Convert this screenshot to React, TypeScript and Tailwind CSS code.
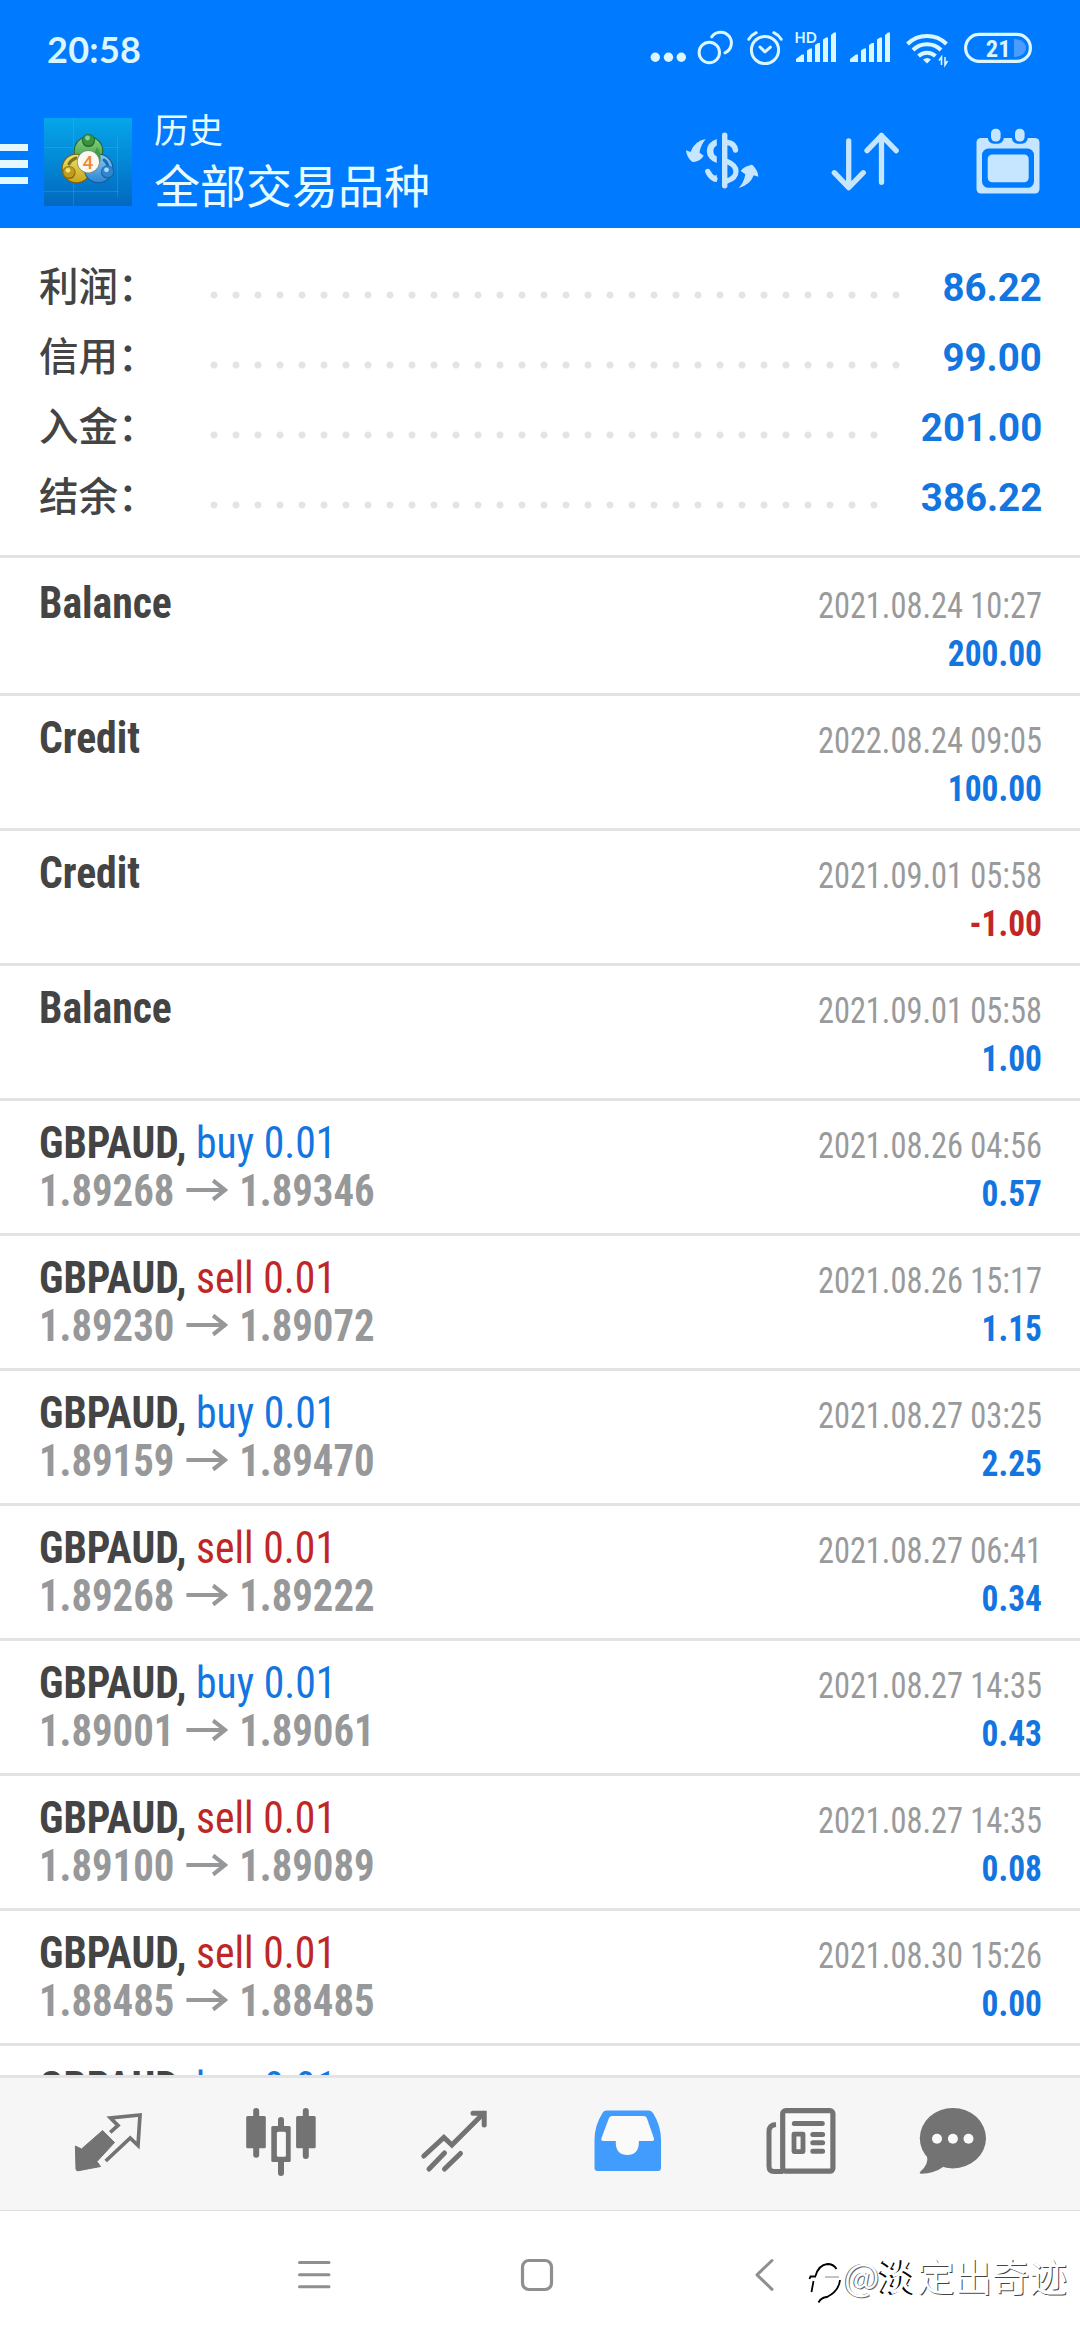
import type { ReactNode } from 'react'

const summary = [
  { label: '利润：', value: '86.22', dots: 32 },
  { label: '信用：', value: '99.00', dots: 32 },
  { label: '入金：', value: '201.00', dots: 31 },
  { label: '结余：', value: '386.22', dots: 31 },
]

type Deal = {
  title: string
  side?: 'buy' | 'sell'
  volume?: string
  open?: string
  close?: string
  time: string
  amount: string
}

const deals: Deal[] = [
  { title: 'Balance', time: '2021.08.24 10:27', amount: '200.00' },
  { title: 'Credit', time: '2022.08.24 09:05', amount: '100.00' },
  { title: 'Credit', time: '2021.09.01 05:58', amount: '-1.00' },
  { title: 'Balance', time: '2021.09.01 05:58', amount: '1.00' },
  { title: 'GBPAUD,', side: 'buy', volume: '0.01', open: '1.89268', close: '1.89346', time: '2021.08.26 04:56', amount: '0.57' },
  { title: 'GBPAUD,', side: 'sell', volume: '0.01', open: '1.89230', close: '1.89072', time: '2021.08.26 15:17', amount: '1.15' },
  { title: 'GBPAUD,', side: 'buy', volume: '0.01', open: '1.89159', close: '1.89470', time: '2021.08.27 03:25', amount: '2.25' },
  { title: 'GBPAUD,', side: 'sell', volume: '0.01', open: '1.89268', close: '1.89222', time: '2021.08.27 06:41', amount: '0.34' },
  { title: 'GBPAUD,', side: 'buy', volume: '0.01', open: '1.89001', close: '1.89061', time: '2021.08.27 14:35', amount: '0.43' },
  { title: 'GBPAUD,', side: 'sell', volume: '0.01', open: '1.89100', close: '1.89089', time: '2021.08.27 14:35', amount: '0.08' },
  { title: 'GBPAUD,', side: 'sell', volume: '0.01', open: '1.88485', close: '1.88485', time: '2021.08.30 15:26', amount: '0.00' },
]

// Icons are drawn in screen coordinates, box = "x y width height"
function Icon({ box, className = '', children }: { box: string; className?: string; children: ReactNode }) {
  const [, , w, h] = box.split(' ').map(Number)
  return (
    <svg viewBox={box} width={w} height={h} className={`block shrink-0 ${className}`} fill="none">
      {children}
    </svg>
  )
}

function Signal({ x }: { x: number }) {
  return (
    <g fill="currentColor">
      <path d={`M${x} 62v-3l6-4.5h2v7.5z`} />
      <path d={`M${x + 11} 62V50.5l3-2h2V62z`} />
      <path d={`M${x + 19} 62V45l3-2h2V62z`} />
      <path d={`M${x + 27} 62V39.5l3-2h2V62z`} />
      <path d={`M${x + 35} 62V35l3-2.5h2V62z`} />
    </g>
  )
}

function StatusBar() {
  return (
    <div className="flex h-[96px] pl-[47px] pt-[28px] text-[#dcf6ff]">
      <div className="w-[603px] font-['Lato',sans-serif] text-[36px] font-bold leading-[42px] tracking-[0.3px]">20:58</div>
      <Icon box="650 28 36 40">
        <g fill="currentColor">
          <circle cx="655.3" cy="57.3" r="4.7" />
          <circle cx="668.5" cy="57.3" r="4.7" />
          <circle cx="681.3" cy="57.3" r="4.7" />
        </g>
      </Icon>
      <Icon box="696 28 40 40" className="ml-[10px]">
        <g stroke="currentColor" strokeWidth="3" strokeLinecap="round">
          <circle cx="709.3" cy="52.5" r="10.2" />
          <path d="M711.7 36.8A10.8 10.8 0 1 1 725 52.8" />
        </g>
      </Icon>
      <Icon box="746 28 38 40" className="ml-[10px]">
        <g stroke="currentColor" strokeWidth="3" strokeLinecap="round" strokeLinejoin="round">
          <circle cx="765" cy="50" r="13.6" />
          <path d="M760 47l5 4.8 5.4-4.6" />
          <path d="M748.8 39.3q2.6-4.4 7.4-6.6M781.2 39.3q-2.6-4.4-7.4-6.6" />
        </g>
      </Icon>
      <Icon box="794 28 44 40" className="ml-[10px]">
        <text x="794.5" y="42.7" fontSize="14.5" className="fill-current font-['Lato',sans-serif] font-bold">HD</text>
        <Signal x={796} />
      </Icon>
      <Icon box="848 28 44 40" className="ml-[10px]">
        <Signal x={850} />
      </Icon>
      <Icon box="904 28 46 40" className="ml-[12px]">
        <g stroke="currentColor" strokeWidth="4">
          <path d="M907.5 44a28 28 0 0 1 39 0" />
          <path d="M913 50a20 20 0 0 1 28 0" />
          <path d="M918.5 56a12.5 12.5 0 0 1 17 0" />
        </g>
        <path d="M923 59.5q4-3 8 0l-4 4z" fill="currentColor" />
        <path d="M941.5 65v-8l-2.5 3.5M945 57v8l2.5-4" stroke="currentColor" strokeWidth="1.6" />
      </Icon>
      <Icon box="962 28 72 40" className="ml-[12px]">
        <rect x="965.6" y="34.4" width="64.8" height="27" rx="13.5" stroke="currentColor" strokeWidth="3.2" />
        <path d="M1014 39q12 1 12 9t-12 9z" fill="#4a9cff" />
        <text x="985.8" y="56.8" fontSize="24.5" className="fill-current font-['Roboto',sans-serif] font-bold [font-stretch:75%]">21</text>
      </Icon>
    </div>
  )
}

function AppLogo() {
  return (
    <Icon box="44 118 88 88">
      <defs>
        <linearGradient id="tile" x1="0" y1="0" x2="0" y2="1">
          <stop offset="0" stopColor="#05a6ea" />
          <stop offset="1" stopColor="#0268c0" />
        </linearGradient>
        <linearGradient id="green" x1="0" y1="0" x2="0" y2="1">
          <stop offset="0" stopColor="#8ccf86" />
          <stop offset="1" stopColor="#2f9a35" />
        </linearGradient>
        <linearGradient id="gold" x1="0" y1="0" x2="0" y2="1">
          <stop offset="0" stopColor="#efe26a" />
          <stop offset="1" stopColor="#c9a51c" />
        </linearGradient>
        <linearGradient id="sky" x1="0" y1="0" x2="0" y2="1">
          <stop offset="0" stopColor="#8cc8f0" />
          <stop offset="1" stopColor="#2c86d4" />
        </linearGradient>
      </defs>
      <rect x="44" y="118" width="88" height="88" fill="url(#tile)" />
      <path d="M44 147.5h75M44 191.5h75M73.500 118v88M117.500 137v60" stroke="#5cc0ee" strokeOpacity=".25" />
      <circle cx="88.500" cy="151" r="14.800" fill="#22612c" />
      <circle cx="88.500" cy="151" r="13.800" fill="url(#green)" />
      <circle cx="76.500" cy="168.500" r="14.800" fill="#75610d" />
      <circle cx="76.500" cy="168.500" r="13.800" fill="url(#gold)" />
      <circle cx="98.500" cy="168.500" r="14.800" fill="#155a96" />
      <circle cx="98.500" cy="168.500" r="13.800" fill="url(#sky)" />
      <path d="M69 164q2-4 7-6" stroke="#7d7422" strokeWidth="3" strokeLinecap="round" />
      <path d="M104 160q4 3 3.500 7" stroke="#1a6db5" strokeWidth="3" strokeLinecap="round" />
      <path d="M97 147q4.500 6 3.500 15l-8-4z" fill="#3f9e40" />
      <circle cx="88.500" cy="140.500" r="6.600" fill="#236b2b" />
      <circle cx="88.500" cy="140" r="5.600" fill="#39923f" />
      <circle cx="87.500" cy="138" r="2.400" fill="#8fd08f" />
      <circle cx="69" cy="172.500" r="6.600" fill="#8a6c0c" />
      <circle cx="69" cy="172" r="5.600" fill="#bf9c1c" />
      <circle cx="68" cy="170.300" r="2.400" fill="#f3e27c" />
      <circle cx="107.500" cy="172" r="6.600" fill="#1b66a6" />
      <circle cx="107.500" cy="171.500" r="5.600" fill="#2f86cf" />
      <circle cx="106.500" cy="169.800" r="2.400" fill="#a8d8f6" />
      <circle cx="88.300" cy="161.700" r="11.500" fill="#7a8a70" />
      <circle cx="88.300" cy="161.700" r="10.700" fill="#fbf7f2" />
      <text x="88" y="168.500" fontSize="19" textAnchor="middle" className="fill-[#f08a32] font-['Roboto',sans-serif] font-medium">4</text>
    </Icon>
  )
}

function AppBar() {
  return (
    <div className="flex h-[132px]">
      <div className="mt-[47.5px] flex w-[27.5px] flex-col gap-[9px]">
        <span className="h-[7.5px] bg-[#e4f9ff]" />
        <span className="h-[7.5px] bg-[#e4f9ff]" />
        <span className="h-[7.5px] bg-[#e4f9ff]" />
      </div>
      <div className="ml-[16.5px] mt-[22px]">
        <AppLogo />
      </div>
      <div className="ml-[22px] mt-[7px] w-[526px] font-['Noto_Sans_CJK_SC',sans-serif] text-[#e8fbff]">
        <div className="text-[34.5px] leading-[50px]">历史</div>
        <div className="text-[46px] leading-[61px]">全部交易品种</div>
      </div>
      <div className="mt-[26px] flex text-[#c6e5ff]">
        <Icon box="680 122 84 78">
          <g stroke="currentColor" strokeLinecap="round">
            <path d="M724.700 135.300v50.500" strokeWidth="5.400" />
            <path d="M727.500 142.500q7 1 8 7.500" strokeWidth="5.400" />
            <path d="M727 161.500q9 3.500 9 10t-9 9.500" strokeWidth="5.200" />
            <path d="M707.800 171.500q2 5 7 7.500" strokeWidth="5.400" />
          </g>
          <path d="M716.800 139q-10 3.500-10 12t10 12v-6.500q-3.400-1.500-3.400-5.500t3.400-5.500z" fill="currentColor" />
          <path d="M716.800 174.500v7.500q-4-1-6-3z" fill="currentColor" />
          <path d="M686 150.300l4.500 1.700q4-11 15.200-13-5 6-6.200 13.500l4.200 3.200q-3 5-8.700 6-2.700 1-4-1-4.500-4-5-10.400z" fill="currentColor" />
          <path d="M758.300 176.700l-4.500-1.400q-4 10-15.100 12.700 5.500-6 6.600-13.700l-4.600-3.300q3-4.500 8.700-5.600 2.700-1.400 4 .6 4.500 4.500 4.900 10.700z" fill="currentColor" />
        </Icon>
        <Icon box="828 122 74 78" className="ml-[64px]">
          <g stroke="currentColor" strokeWidth="5.300" strokeLinecap="round" strokeLinejoin="round">
            <path d="M848.700 141v46.500M834.300 172.700l14.400 15 14.600-15" />
            <path d="M881.500 182.300V135.500M867 150.700l14.500-15.200 14.700 15.200" />
          </g>
        </Icon>
        <Icon box="970 122 76 78" className="ml-[68px]">
          <rect x="976.500" y="138" width="63" height="55.500" rx="4.500" fill="currentColor" />
          <rect x="982" y="148.500" width="52" height="39.300" rx="6.500" fill="#007bff" />
          <rect x="987.700" y="154.500" width="41" height="27.700" rx="4.500" fill="currentColor" />
          <rect x="987.800" y="126" width="16" height="17.800" rx="6" fill="#007bff" />
          <rect x="1011.800" y="126" width="16" height="17.800" rx="6" fill="#007bff" />
          <rect x="991" y="128.700" width="9.600" height="12.800" rx="4.500" fill="currentColor" />
          <rect x="1015" y="128.700" width="9.600" height="12.800" rx="4.500" fill="currentColor" />
        </Icon>
      </div>
    </div>
  )
}

function SummaryRow({ label, value, dots }: { label: string; value: string; dots: number }) {
  return (
    <div className="flex h-[70px] items-center">
      <div className="w-[163.5px] pb-[6px] font-['Noto_Sans_CJK_SC',sans-serif] text-[39.5px] font-medium text-[#444]">{label}</div>
      <div
        className="mt-[15px] h-[22px] bg-[radial-gradient(circle,#e4e4e4_3px,transparent_4px)] bg-[length:22px_22px]"
        style={{ width: dots * 22 }}
      />
      <div className="ml-auto origin-right scale-x-[0.985] pt-[2px] text-[39px] font-bold text-[#1275e0]">{value}</div>
    </div>
  )
}

function DealRow({ deal }: { deal: Deal }) {
  return (
    <div className="flex h-[135px] shrink-0 justify-between border-b-[3px] border-[#e3e3e3] pl-[39px] pr-[38px] leading-[48px] [font-stretch:75%]">
      <div className="pt-[18px] text-[44px]">
        <div className="origin-left scale-x-[0.947] whitespace-pre">
          <span className="font-bold text-[#444]">{deal.title}</span>
          {deal.side && (
            <span className={deal.side === 'buy' ? 'text-[#1275e0]' : 'text-[#c12626]'}>
              {' '}{deal.side} {deal.volume}
            </span>
          )}
        </div>
        {deal.open && (
          <div className="flex origin-left scale-x-[0.926] items-center font-bold text-[#979899]">
            <span>{deal.open}</span>
            <svg width="45" height="24" viewBox="0 0 45 24" className="ml-[13px] mr-[12px]" fill="none" stroke="currentColor" strokeWidth="4.200">
              <path d="M0 11h43M29 1.500L42 11 29 20.500" />
            </svg>
            <span>{deal.close}</span>
          </div>
        )}
      </div>
      <div className="pt-[21px] text-right text-[36px]">
        <div className="origin-right scale-x-[0.9] text-[#999a9b]">{deal.time}</div>
        <div className={`origin-right scale-x-[0.928] font-bold ${deal.amount.startsWith('-') ? 'text-[#c12626]' : 'text-[#1275e0]'}`}>
          {deal.amount}
        </div>
      </div>
    </div>
  )
}

function TabBar() {
  return (
    <div className="flex h-[136px] shrink-0 border-b border-t-[3px] border-b-[#dedede] border-t-[#e3e3e3] bg-[#f6f6f6] pl-[68px] pt-[24px] text-[#737373]">
      <Icon box="68 2102 80 80">
        <path d="M102.600 2130.500L114.500 2142.500 97 2161.500 100.500 2166.500 78 2170.800Q76 2171 76 2169L75.400 2146 81.500 2149z" fill="currentColor" stroke="currentColor" strokeWidth="1" strokeLinejoin="round" />
        <path d="M110.200 2132.300l7.800-6.800-7.500-7.500 29.500-3-2 30.500-7.800-7.500-24.500 23" stroke="currentColor" strokeWidth="3.700" />
      </Icon>
      <Icon box="241 2102 80 80" className="ml-[93px]">
        <g stroke="currentColor" strokeWidth="6" strokeLinecap="round">
          <path d="M256.200 2111v43.700M281 2120v8M281 2160v13M305.800 2111v45" />
        </g>
        <rect x="246.200" y="2116" width="19.600" height="32.300" rx="1.500" fill="currentColor" />
        <rect x="296.100" y="2116" width="19.600" height="32.300" rx="1.500" fill="currentColor" />
        <rect x="271.300" y="2126" width="19.400" height="36" rx="1.500" fill="currentColor" />
        <rect x="276.900" y="2131.700" width="9" height="25" rx="1.500" fill="#f9f9f9" />
      </Icon>
      <Icon box="414 2102 80 80" className="ml-[93px]">
        <g stroke="currentColor" strokeWidth="5" strokeLinecap="round">
          <path d="M423.800 2156l20.100-18.500 8 7.500 31.500-31.500" strokeLinejoin="miter" />
          <path d="M473 2113.200h11.200v11.800" />
          <path d="M429 2169l15.500-16M444.500 2169l16-15.500" />
        </g>
      </Icon>
      <Icon box="587 2102 80 80" className="ml-[93px] text-[#429cfe]">
        <path d="M606 2110.500h43q2.500 0 4 2.500 8 12.500 8 27v28q0 3-3 3h-60.500q-3 0-3-3v-28q0-14.500 8-27 1.200-2.500 3.500-2.500z" fill="currentColor" />
        <path d="M612 2116q-2 0-3 2l-7.500 20q-1 3 2 3h12.300v3q1 11 11.500 11t11.500-11v-3h13q3 0 2-3l-7-20q-1-2-3-2z" fill="#fafafa" />
      </Icon>
      <Icon box="761 2102 80 80" className="ml-[94px]">
        <path d="M776 2124.500q-7 .5-7 7v34.500q0 5.500 5 5.500h9" stroke="currentColor" strokeWidth="5" />
        <rect x="782.700" y="2110.600" width="50.200" height="60.600" rx="3" fill="#f9f9f9" stroke="currentColor" strokeWidth="5.200" />
        <g stroke="currentColor" strokeWidth="5" strokeLinecap="round">
          <path d="M794.300 2123.400h28M812.800 2134.400h9.800M812.800 2142.700h9.800M812.800 2151.200h9.800" />
        </g>
        <rect x="794" y="2134.100" width="9" height="17.500" stroke="currentColor" strokeWidth="4.800" strokeLinejoin="round" />
      </Icon>
      <Icon box="913 2102 80 80" className="ml-[72px]">
        <ellipse cx="952.900" cy="2138.200" rx="33.100" ry="30.200" fill="currentColor" />
        <path d="M927 2156q2 8-6.500 15.500-2 2.200 1 2.200 13-.5 22-7z" fill="currentColor" />
        <circle cx="937" cy="2138.700" r="5" fill="#fafafa" />
        <circle cx="952.900" cy="2138.700" r="5" fill="#fafafa" />
        <circle cx="968.500" cy="2138.700" r="5" fill="#fafafa" />
      </Icon>
    </div>
  )
}

function NavBar() {
  return (
    <div className="flex h-[129px] shrink-0 bg-white pl-[294px] pt-[44px] text-[#8f8f8f]">
      <Icon box="294 2255 40 40">
        <path d="M299.500 2262.500h29.500M299.500 2274.700h29.500M299.500 2286.700h29.500" stroke="currentColor" strokeWidth="3" strokeLinecap="round" />
      </Icon>
      <Icon box="516 2255 42 40" className="ml-[182px]">
        <rect x="522.500" y="2260.500" width="29" height="29" rx="6.500" stroke="currentColor" strokeWidth="3.200" />
      </Icon>
      <Icon box="748 2255 32 40" className="ml-[190px]">
        <path d="M772 2260.500l-15 14.300 15 14.500" stroke="currentColor" strokeWidth="3" strokeLinecap="round" strokeLinejoin="round" />
      </Icon>
      <Icon box="804 2255 40 50" className="ml-[24px]">
        <path d="M815.500 2276q3-11 12-12 6 0 9 5M840 2280q-1 11-13 17-6 .5-8.500 5.500M813.500 2281l-2 11M809.500 2279l1-2.500h5.500" stroke="#000" strokeWidth="1.800" />
        <path d="M825 2277h14" stroke="#888" strokeWidth="1" />
      </Icon>
      <div className="-mt-[3px] flex font-['Noto_Sans_CJK_SC',sans-serif] text-[37.5px] leading-[46px] text-white">
        <span className="[text-shadow:-1px_0_0_#666,1px_1px_0_#666]">@</span>
        <span className="font-medium [text-shadow:-2px_1px_0_#000]">淡</span>
        <span className="[text-shadow:1px_1px_0_#444]">定出奇迹</span>
      </div>
    </div>
  )
}

export default function App() {
  return (
    <div className="flex h-[2340px] w-[1080px] flex-col overflow-hidden bg-white font-['Roboto','Noto_Sans_CJK_SC',sans-serif]">
      <header className="h-[228px] shrink-0 bg-[#007bff]">
        <StatusBar />
        <AppBar />
      </header>
      <main className="flex min-h-0 flex-1 flex-col overflow-hidden">
        <section className="shrink-0 border-b-[3px] border-[#e3e3e3] pb-[23px] pl-[39px] pr-[38px] pt-[24px]">
          {summary.map((row) => (
            <SummaryRow key={row.label} {...row} />
          ))}
        </section>
        <section className="flex flex-col pt-[3px]">
          {deals.map((deal, i) => (
            <DealRow key={i} deal={deal} />
          ))}
          <DealRow deal={{ title: 'GBPAUD,', side: 'buy', volume: '0.01', time: '', amount: '' }} />
        </section>
      </main>
      <TabBar />
      <NavBar />
    </div>
  )
}
